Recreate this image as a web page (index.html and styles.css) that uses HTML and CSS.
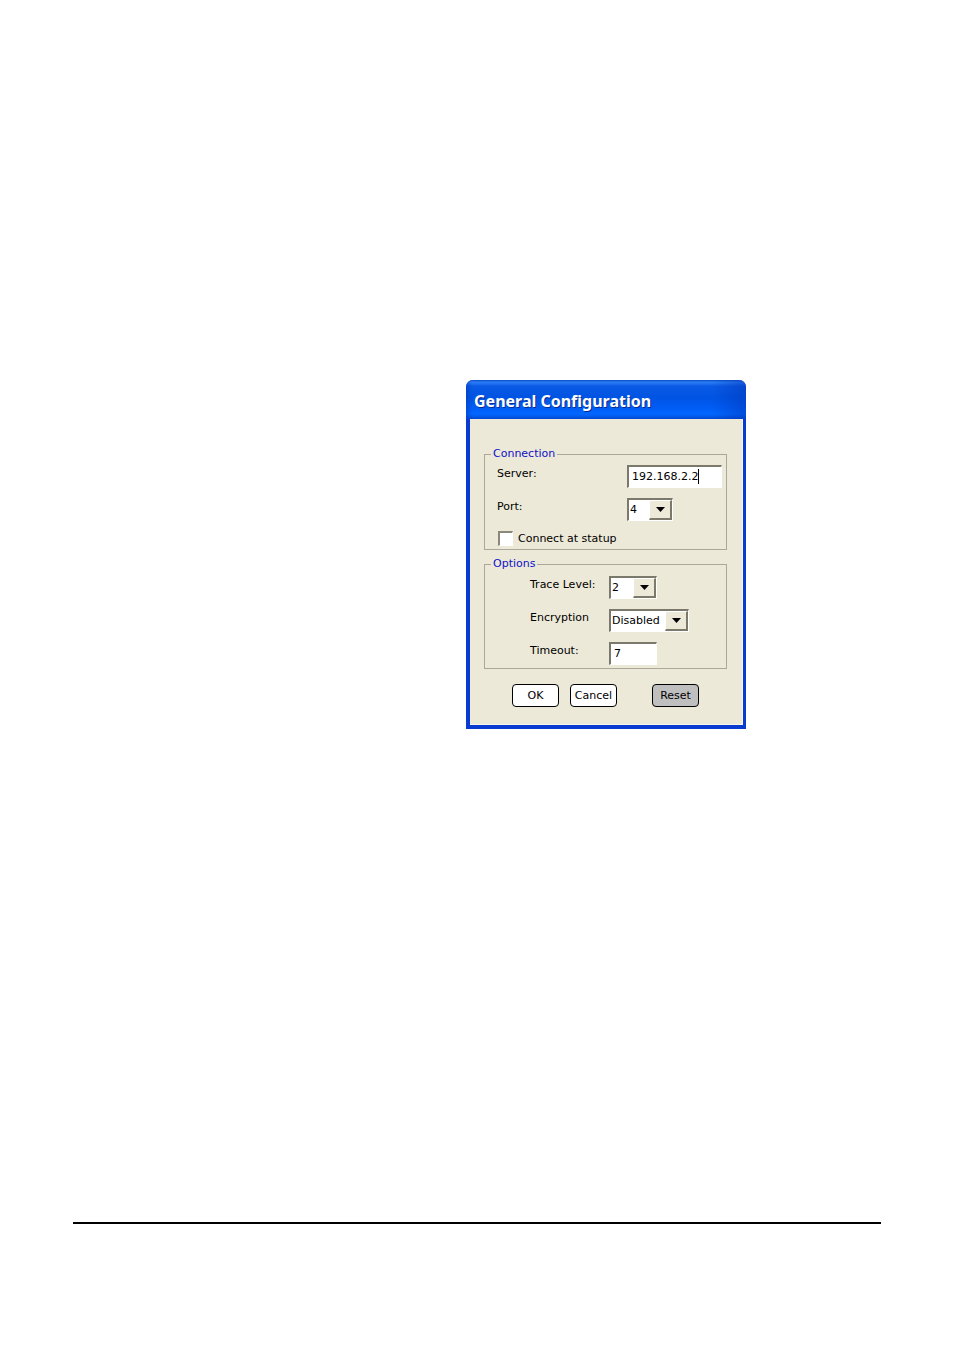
FILE: index.html
```
<!DOCTYPE html>
<html lang="en">
<head>
<meta charset="utf-8">
<title>General Configuration</title>
<link rel="stylesheet" href="styles.css">
</head>
<body class="page">
<main class="stage">
  <form class="dialog" aria-labelledby="dialog-title">
    <header class="titlebar"><h1 class="title" id="dialog-title">General Configuration</h1></header>
    <div class="content">
      <fieldset class="group">
        <legend class="legend">Connection</legend>
        <div class="fields fields-connection">
          <label class="label" for="server">Server:</label>
          <span class="field field-wide">
            <input class="sunken" id="server" type="text" value="192.168.2.2">
            <span class="caret"></span>
          </span>
          <label class="label" for="port">Port:</label>
          <span class="field field-port">
            <select class="sunken" id="port"><option>4</option></select>
            <span class="arrow"><svg class="arrow-icon" viewBox="0 0 9 5"><path d="M0 0h9L4.500 5z"/></svg></span>
          </span>
          <div class="check-row">
            <input class="check" id="startup" type="checkbox">
            <label for="startup">Connect at statup</label>
          </div>
        </div>
      </fieldset>
      <fieldset class="group">
        <legend class="legend">Options</legend>
        <div class="fields fields-options">
          <label class="label" for="trace">Trace Level:</label>
          <span class="field field-narrow">
            <select class="sunken" id="trace"><option>2</option></select>
            <span class="arrow"><svg class="arrow-icon" viewBox="0 0 9 5"><path d="M0 0h9L4.500 5z"/></svg></span>
          </span>
          <label class="label" for="encryption">Encryption</label>
          <span class="field field-medium">
            <select class="sunken" id="encryption"><option>Disabled</option></select>
            <span class="arrow"><svg class="arrow-icon" viewBox="0 0 9 5"><path d="M0 0h9L4.500 5z"/></svg></span>
          </span>
          <label class="label" for="timeout">Timeout:</label>
          <span class="field field-narrow"><input class="sunken" id="timeout" type="text" value="7"></span>
        </div>
      </fieldset>
      <div class="actions">
        <button class="button" type="button">OK</button>
        <button class="button" type="button">Cancel</button>
        <button class="button button-reset" type="button">Reset</button>
      </div>
    </div>
  </form>
</main>
<hr class="rule">
</body>
</html>
```
FILE: styles.css
```
* { box-sizing: border-box; }

.page {
  margin: 0;
  min-height: 100vh;
  display: flex;
  flex-direction: column;
  background: #fff;
  color: #000;
  font: 11px/14px "DejaVu Sans", sans-serif;
}

.stage {
  flex: 1;
  padding: 380px 73px 0 466px;
}

.rule {
  width: auto;
  height: 2px;
  margin: 0 73px 126px;
  border: 0;
  background: #000;
}

.dialog {
  width: 280px;
  border: solid #0a3bd0;
  border-width: 0 3px 4px 4px;
  border-radius: 7px 7px 0 0;
  background: #ece9d8;
}

.titlebar {
  height: 39px;
  margin: 0 -3px 0 -4px;
  padding: 0 8px;
  display: flex;
  align-items: center;
  border-radius: 7px 7px 0 0;
  background:
    linear-gradient(90deg, #0036b880 0, #0036b800 6px, #0036b800 88%, #0036b880 100%),
    linear-gradient(#0a50c8 0, #2a7cf5 6%, #0a5ae4 16%, #0054e3 45%, #005cf5 70%, #0066ff 88%, #0047d0 100%);
}

.title {
  margin: 2px 0 0;
  color: #fff;
  font: bold 16px/20px "Noto Sans", sans-serif;
  text-shadow: 1px 1px 0 #0a2c90;
}

.content {
  padding: 28px 16px 18px 14px;
  border: solid #f8f6ec;
  border-width: 0 1px 1px 0;
  padding-right: 15px;
  padding-bottom: 17px;
}

.group {
  min-width: 0;
  margin: 0 0 7px;
  padding: 0;
  border: 1px solid #aca899;
}

.legend {
  margin-left: 6px;
  padding: 0 2px;
  color: #1010c8;
}

.fields {
  display: grid;
  row-gap: 10px;
  justify-items: start;
  align-items: start;
}

.fields-connection {
  grid-template-columns: 130px 1fr;
  padding: 4px 4px 3px 12px;
}

.fields-options {
  grid-template-columns: 79px 1fr;
  padding: 5px 4px 3px 45px;
}

.label { line-height: 18px; }

.field {
  position: relative;
  display: block;
  height: 23px;
}

.field-wide { width: 95px; }
.field-port { width: 46px; }
.field-narrow { width: 48px; }
.field-medium { width: 80px; }

.sunken {
  appearance: none;
  display: block;
  width: 100%;
  height: 100%;
  margin: 0;
  padding: 0 3px;
  border: solid;
  border-width: 2px 1px 1px 2px;
  border-color: #7b796c #fff #fff #7b796c;
  border-radius: 0;
  outline: 0;
  background: #fff;
  color: #000;
  font: inherit;
}

input.sunken { padding-bottom: 1px; }

select.sunken { padding: 0 0 0 1px; }

.caret {
  position: absolute;
  top: 4px;
  left: 71px;
  width: 1px;
  height: 15px;
  background: #000;
}

.arrow {
  position: absolute;
  top: 2px;
  right: 1px;
  bottom: 1px;
  width: 23px;
  display: flex;
  align-items: center;
  justify-content: center;
  border: solid;
  border-width: 1px 2px 2px 1px;
  border-color: #fff #7b796c #7b796c #fff;
  background: #ece9d8;
  pointer-events: none;
}

.arrow-icon {
  width: 9px;
  height: 5px;
  fill: #000;
}

.check-row {
  grid-column: 1 / -1;
  display: flex;
  align-items: center;
  gap: 5px;
  margin-left: 1px;
}

.check {
  appearance: none;
  width: 15px;
  height: 15px;
  margin: 0;
  border: solid;
  border-width: 2px 1px 1px 2px;
  border-color: #8b887a #fff #fff #8b887a;
  background: #fff;
}

.actions {
  display: flex;
  gap: 11px;
  margin: 15px 28px 0;
}

.button {
  width: 47px;
  height: 23px;
  padding: 0;
  border: 1px solid #000;
  border-radius: 4px;
  background: #fff;
  color: #000;
  font: inherit;
}

.button-reset {
  margin-left: auto;
  background: #c0bfc0;
}
```
